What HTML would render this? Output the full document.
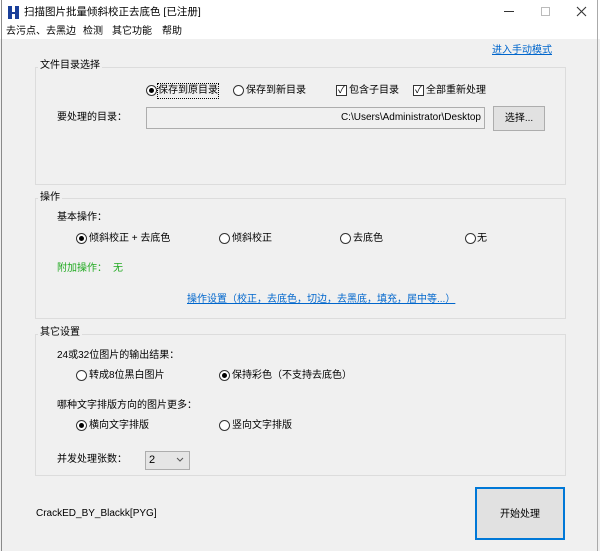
<!DOCTYPE html>
<html><head><meta charset="utf-8"><style>
*{margin:0;padding:0;box-sizing:border-box}
body{width:600px;height:551px;background:#f0f0f0;font-family:"Liberation Sans","Noto Sans CJK SC",sans-serif;font-size:10px;color:#000;position:relative;overflow:hidden}
.a{position:absolute;white-space:nowrap;line-height:14px}
.top{position:absolute;left:0;top:0;width:600px;height:39px;background:#fff}
.bl{position:absolute;top:0;bottom:0;width:1px;background:#8a8a8a}
.g{position:absolute;border:1px solid #dcdcdc;}
.gt{position:absolute;background:#f0f0f0;padding:0 2px;line-height:14px}
.r{position:absolute;width:11px;height:11px;border:1px solid #333;border-radius:50%;background:#fff}
.r.on::after{content:"";position:absolute;left:2px;top:2px;width:5px;height:5px;border-radius:50%;background:#000}
.c{position:absolute;width:11px;height:11px;border:1px solid #333;background:#fff;font-size:10px;line-height:9px;text-align:center}
.lk{color:#0066cc;text-decoration:underline}
</style></head><body>
<div class="top"></div>
<div class="bl" style="left:1px"></div>
<div class="bl" style="left:597px;background:#aaa"></div>
<svg class="a" style="left:8px;top:6px" width="11" height="13"><rect x="0" y="0" width="4" height="13" fill="#1a3f9a"/><rect x="7" y="0" width="4" height="13" fill="#1a3f9a"/><rect x="4" y="6" width="3" height="2" fill="#1a3f9a"/></svg>
<div class="a" style="left:24px;top:5px;font-size:10.5px">扫描图片批量倾斜校正去底色 [已注册]</div>
<div class="a" style="left:504px;top:11px;width:10px;height:1px;background:#333"></div>
<div class="a" style="left:541px;top:7px;width:9px;height:9px;border:1px solid #bbb"></div>
<svg class="a" style="left:576px;top:6px" width="11" height="11"><path d="M1 1L10 10M10 1L1 10" stroke="#333" stroke-width="1.1"/></svg>
<div class="a" style="left:6px;top:25px">去污点、去黑边</div>
<div class="a" style="left:83px;top:25px">检测</div>
<div class="a" style="left:112px;top:25px">其它功能</div>
<div class="a" style="left:162px;top:25px">帮助</div>
<div class="a lk" style="left:492px;top:44px">进入手动模式</div>

<div class="g" style="left:35px;top:67px;width:531px;height:118px"></div>
<div class="gt" style="left:38px;top:59px">文件目录选择</div>
<div class="r on" style="left:146px;top:85px"></div>
<div class="a" style="left:158px;top:84px;outline:1px dotted #000">保存到原目录</div>
<div class="r" style="left:233px;top:85px"></div>
<div class="a" style="left:246px;top:84px">保存到新目录</div>
<div class="c" style="left:336px;top:85px">✓</div>
<div class="a" style="left:349px;top:84px">包含子目录</div>
<div class="c" style="left:413px;top:85px">✓</div>
<div class="a" style="left:426px;top:84px">全部重新处理</div>
<div class="a" style="left:57px;top:111px">要处理的目录：</div>
<div class="a" style="left:146px;top:107px;width:339px;height:22px;border:1px solid #adadad;background:#f0f0f0"></div>
<div class="a" style="left:300px;top:111px;width:181px;text-align:right">C:\Users\Administrator\Desktop</div>
<div class="a" style="left:493px;top:106px;width:52px;height:25px;border:1px solid #adadad;background:#e1e1e1;text-align:center;line-height:23px">选择...</div>

<div class="g" style="left:35px;top:198px;width:531px;height:121px"></div>
<div class="gt" style="left:38px;top:191px">操作</div>
<div class="a" style="left:57px;top:211px">基本操作：</div>
<div class="r on" style="left:76px;top:233px"></div><div class="a" style="left:89px;top:232px">倾斜校正 + 去底色</div>
<div class="r" style="left:219px;top:233px"></div><div class="a" style="left:232px;top:232px">倾斜校正</div>
<div class="r" style="left:340px;top:233px"></div><div class="a" style="left:353px;top:232px">去底色</div>
<div class="r" style="left:465px;top:233px"></div><div class="a" style="left:477px;top:232px">无</div>
<div class="a" style="left:57px;top:262px;color:#22aa22">附加操作：</div>
<div class="a" style="left:113px;top:262px;color:#22aa22">无</div>
<div class="a lk" style="left:187px;top:293px;font-size:10px">操作设置（校正，去底色，切边，去黑底，填充，居中等...）</div>

<div class="g" style="left:35px;top:334px;width:531px;height:142px"></div>
<div class="gt" style="left:38px;top:326px">其它设置</div>
<div class="a" style="left:57px;top:349px">24或32位图片的输出结果：</div>
<div class="r" style="left:76px;top:370px"></div><div class="a" style="left:89px;top:369px">转成8位黑白图片</div>
<div class="r on" style="left:219px;top:370px"></div><div class="a" style="left:232px;top:369px">保持彩色（不支持去底色）</div>
<div class="a" style="left:57px;top:399px">哪种文字排版方向的图片更多：</div>
<div class="r on" style="left:76px;top:420px"></div><div class="a" style="left:89px;top:419px">横向文字排版</div>
<div class="r" style="left:219px;top:420px"></div><div class="a" style="left:232px;top:419px">竖向文字排版</div>
<div class="a" style="left:57px;top:453px">并发处理张数：</div>
<div class="a" style="left:145px;top:451px;width:45px;height:19px;border:1px solid #adadad;background:#e5e5e5"></div>
<div class="a" style="left:149px;top:453px;font-size:11px">2</div>
<svg class="a" style="left:176px;top:457px" width="8" height="6"><path d="M1 1L4 4L7 1" stroke="#555" fill="none"/></svg>

<div class="a" style="left:36px;top:507px">CrackED_BY_Blackk[PYG]</div>
<div class="a" style="left:475px;top:487px;width:90px;height:53px;border:2px solid #0078d7;background:#e1e1e1;text-align:center;line-height:51px">开始处理</div>
</body></html>
